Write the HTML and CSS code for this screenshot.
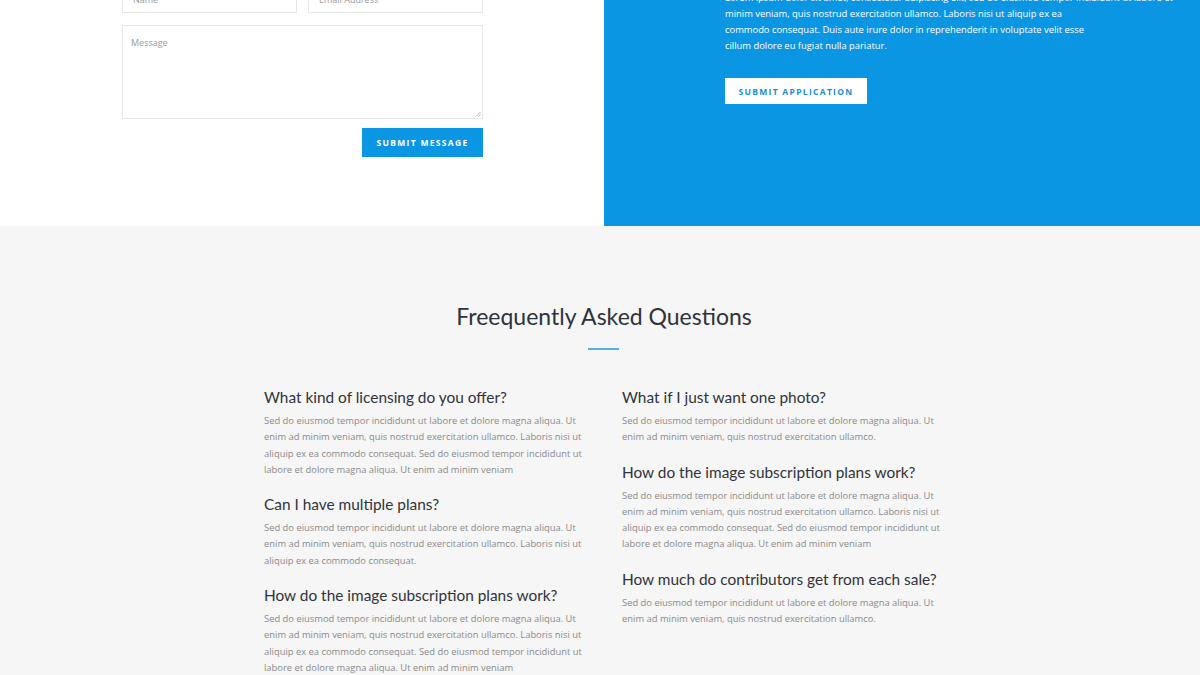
FILE: index.html
```html
<!DOCTYPE html>
<html>
<head>
<meta charset="utf-8">
<link rel="stylesheet" href="styles.css">
</head>
<body>
<section class="contact">
  <div class="contact-form">
    <div class="row">
      <div class="field"><span class="ph">Name</span></div>
      <div class="field"><span class="ph">Email Address</span></div>
    </div>
    <div class="textarea">
      <span class="ph">Message</span>
      <svg class="grip" width="6" height="6" viewBox="0 0 6 6"><path d="M5.5 1 L1 5.5 M5.5 3.5 L3.5 5.5" stroke="#9a9a9a" stroke-width="0.8"/></svg>
    </div>
    <div class="actions"><button class="btn-blue">SUBMIT MESSAGE</button></div>
  </div>
  <div class="apply">
    <p class="apply-text">Lorem ipsum dolor sit amet, consectetur adipiscing elit, sed do eiusmod tempor incididunt ut labore et<br>minim veniam, quis nostrud exercitation ullamco. Laboris nisi ut aliquip ex ea<br>commodo consequat. Duis aute irure dolor in reprehenderit in voluptate velit esse<br>cillum dolore eu fugiat nulla pariatur.</p>
    <button class="btn-white">SUBMIT APPLICATION</button>
  </div>
</section>
<section class="faq">
  <h2 class="faq-title">Freequently Asked Questions</h2>
  <div class="divider"></div>
  <div class="faq-grid">
    <div class="col">
      <div class="item">
        <h3 class="q">What kind of licensing do you offer?</h3>
        <p class="a">Sed do eiusmod tempor incididunt ut labore et dolore magna aliqua. Ut<br>enim ad minim veniam, quis nostrud exercitation ullamco. Laboris nisi ut<br>aliquip ex ea commodo consequat. Sed do eiusmod tempor incididunt ut<br>labore et dolore magna aliqua. Ut enim ad minim veniam</p>
      </div>
      <div class="item">
        <h3 class="q">Can I have multiple plans?</h3>
        <p class="a">Sed do eiusmod tempor incididunt ut labore et dolore magna aliqua. Ut<br>enim ad minim veniam, quis nostrud exercitation ullamco. Laboris nisi ut<br>aliquip ex ea commodo consequat.</p>
      </div>
      <div class="item">
        <h3 class="q">How do the image subscription plans work?</h3>
        <p class="a">Sed do eiusmod tempor incididunt ut labore et dolore magna aliqua. Ut<br>enim ad minim veniam, quis nostrud exercitation ullamco. Laboris nisi ut<br>aliquip ex ea commodo consequat. Sed do eiusmod tempor incididunt ut<br>labore et dolore magna aliqua. Ut enim ad minim veniam</p>
      </div>
    </div>
    <div class="col">
      <div class="item">
        <h3 class="q">What if I just want one photo?</h3>
        <p class="a">Sed do eiusmod tempor incididunt ut labore et dolore magna aliqua. Ut<br>enim ad minim veniam, quis nostrud exercitation ullamco.</p>
      </div>
      <div class="item">
        <h3 class="q">How do the image subscription plans work?</h3>
        <p class="a">Sed do eiusmod tempor incididunt ut labore et dolore magna aliqua. Ut<br>enim ad minim veniam, quis nostrud exercitation ullamco. Laboris nisi ut<br>aliquip ex ea commodo consequat. Sed do eiusmod tempor incididunt ut<br>labore et dolore magna aliqua. Ut enim ad minim veniam</p>
      </div>
      <div class="item">
        <h3 class="q">How much do contributors get from each sale?</h3>
        <p class="a">Sed do eiusmod tempor incididunt ut labore et dolore magna aliqua. Ut<br>enim ad minim veniam, quis nostrud exercitation ullamco.</p>
      </div>
    </div>
  </div>
</section>
</body>
</html>
```
FILE: styles.css
```css
* { box-sizing: border-box; }
html, body { margin: 0; padding: 0; }
body {
  width: 1200px;
  height: 675px;
  overflow: hidden;
  background: #f6f6f6;
  font-family: "Open Sans", "Noto Sans", sans-serif;
}
.contact {
  display: flex;
  height: 266px;
  margin-top: -40px;
  background: #fff;
}
.contact-form {
  flex: 0 0 604px;
  padding: 17px 0 0 122px;
}
.row {
  display: flex;
  gap: 11px;
  width: 361px;
}
.field {
  flex: 1;
  height: 36px;
  border: 1px solid #e6e6e6;
  padding: 16px 10px 0;
}
.ph {
  display: block;
  font-size: 9px;
  color: #9a9a9a;
  line-height: 12px;
}
.textarea {
  position: relative;
  width: 361px;
  height: 94px;
  margin-top: 12px;
  border: 1px solid #e6e6e6;
  padding: 11px 8px;
}
.grip {
  position: absolute;
  right: 1px;
  bottom: 1px;
}
.actions {
  width: 361px;
  display: flex;
  justify-content: flex-end;
  margin-top: 9px;
}
.btn-blue {
  width: 121px;
  height: 29px;
  border: 0;
  background: #0a96e2;
  color: #fff;
  font-family: "Open Sans", sans-serif;
  font-weight: 700;
  font-size: 8.5px;
  letter-spacing: 1.3px;
  padding: 0;
}
.apply {
  flex: 1;
  background: #0a96e2;
  padding: 30px 0 0 121px;
}
.apply-text {
  margin: 0;
  color: #fff;
  font-size: 9.4px;
  line-height: 16px;
  white-space: nowrap;
}
.btn-white {
  display: block;
  margin-top: 24px;
  width: 142px;
  height: 26px;
  border: 0;
  background: #fff;
  color: #1a8fd2;
  font-family: "Open Sans", sans-serif;
  font-weight: 700;
  font-size: 8.5px;
  letter-spacing: 1.3px;
  padding: 0;
}
.faq {
  padding-top: 76px;
  background: #f6f6f6;
}
.faq-title {
  margin: 0;
  padding-left: 8px;
  text-align: center;
  font-family: "Lato", sans-serif;
  font-weight: 400;
  font-size: 23px;
  line-height: 28px;
  color: #2f323a;
}
.divider {
  width: 31px;
  height: 2px;
  background: #52b0e6;
  margin: 18px 0 0 588px;
}
.faq-grid {
  display: grid;
  grid-template-columns: 322px 322px;
  column-gap: 36px;
  margin: 39px 0 0 264px;
}
.item { margin-bottom: 18px; }
.q {
  margin: 0 0 8px;
  font-family: "Lato", sans-serif;
  font-weight: 400;
  font-size: 15.4px;
  line-height: 16px;
  color: #30333b;
}
.a {
  margin: 0;
  font-size: 9.4px;
  line-height: 16.3px;
  color: #8a8a8a;
  white-space: nowrap;
}
```
